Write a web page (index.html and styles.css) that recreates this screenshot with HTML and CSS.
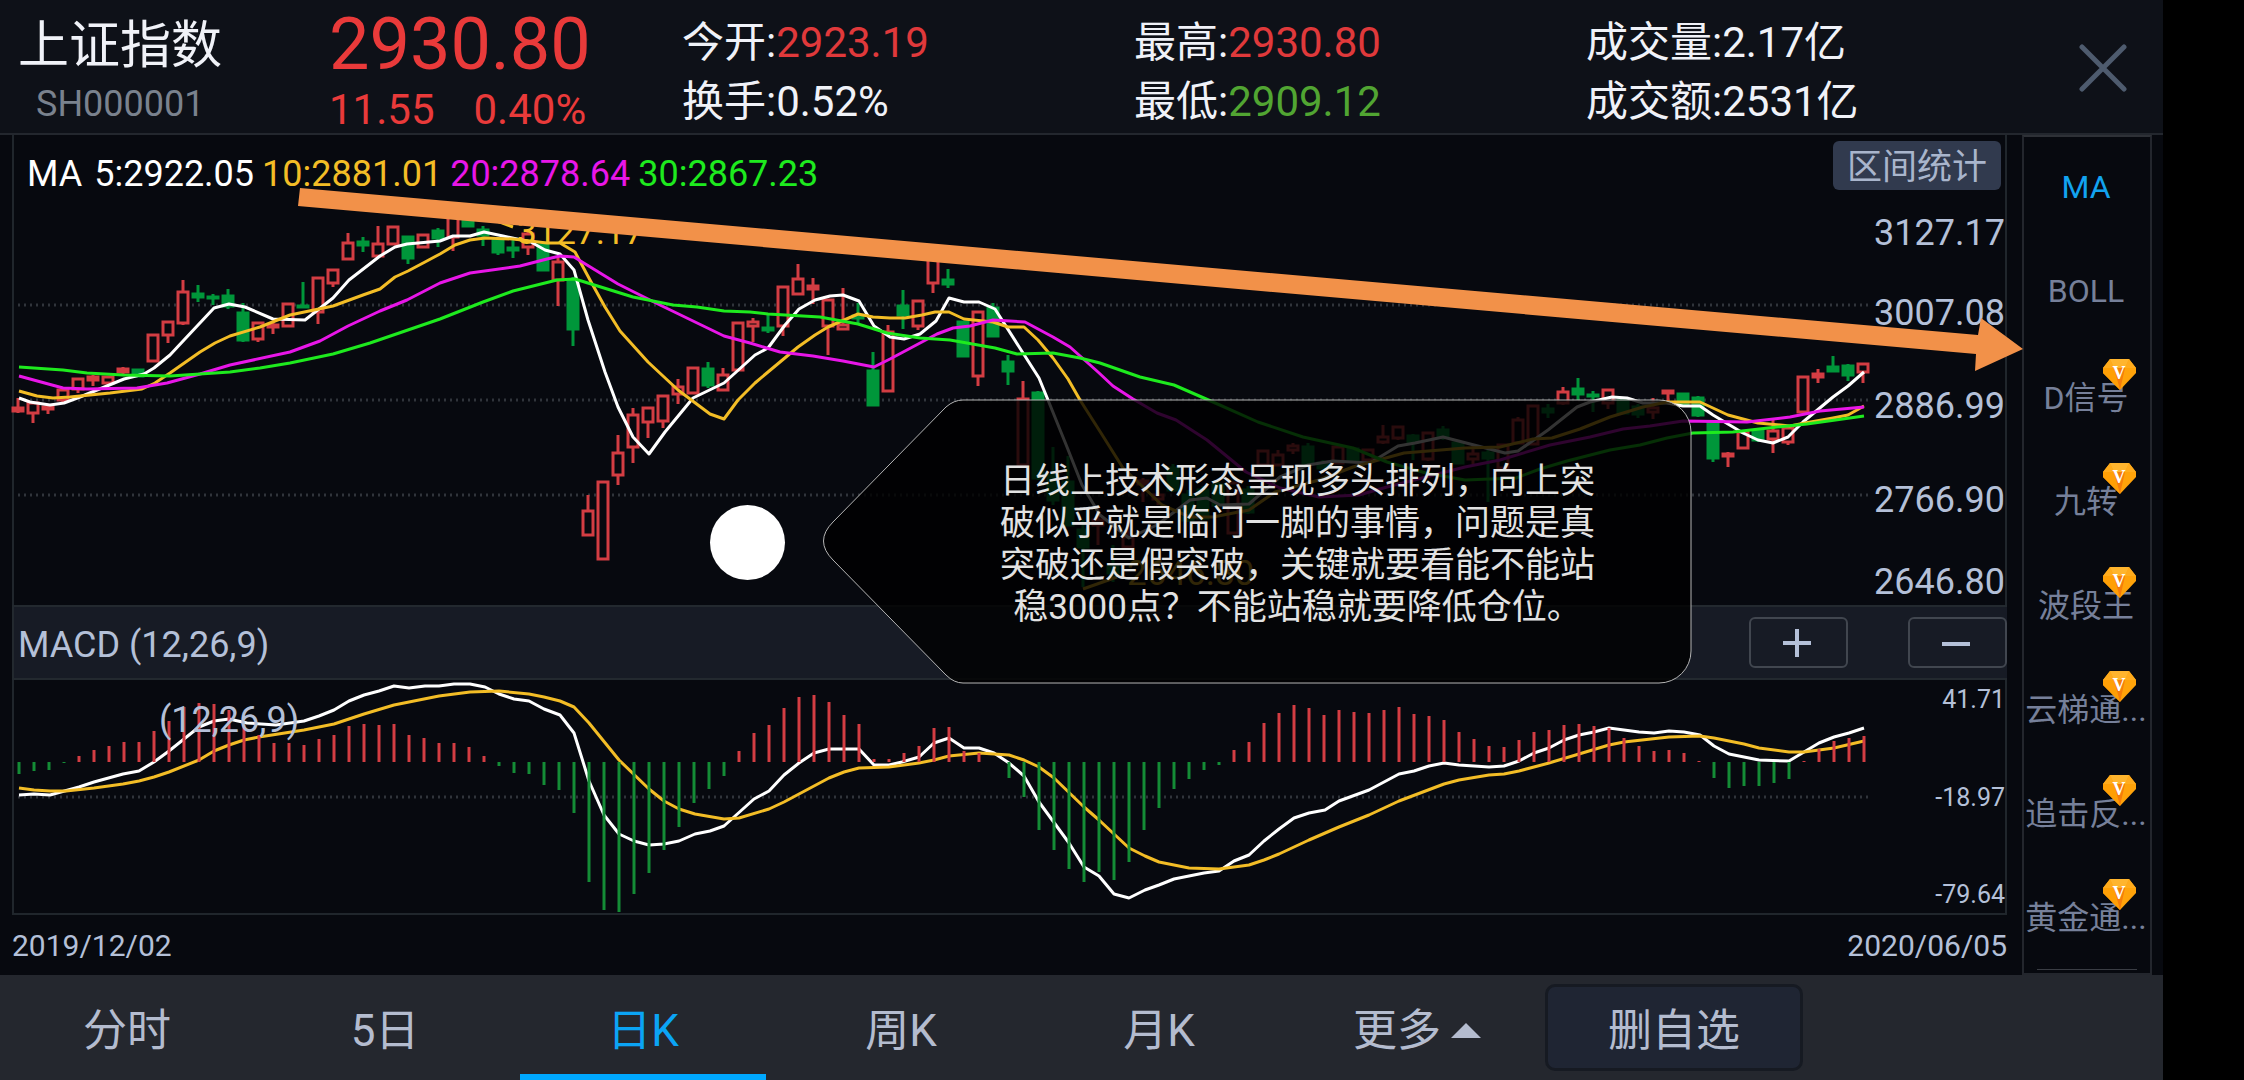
FILE: index.html
```html
<!DOCTYPE html>
<html lang="zh-CN">
<head>
    <meta charset="UTF-8">
    <meta name="viewport" content="width=device-width, initial-scale=1.0">
    <title>上证指数 SH000001</title>
    <link rel="stylesheet" href="styles.css">
</head>
<body>
    <svg class="defs" aria-hidden="true">
        <symbol id="gem" viewBox="0 0 33 31">
            <path d="M7 0h19l7 9v5L17 31 0 14V9z" fill="#ffa30a"/>
            <path d="M7 0h19l-4 9H11z" fill="#ffb52e"/>
            <path d="M0 9l11 0 6 22L0 14z" fill="#ff9f05"/>
            <path d="M11 9h11l-5 22z" fill="#f57c0a"/>
            <path d="M7 0l4 9H0zM26 0l7 9H22z" fill="#ffab1c"/>
        </symbol>
    </svg>

    <div class="screen">
        <header class="header">
            <div class="stock">
                <h1>上证指数</h1>
                <p>SH000001</p>
            </div>
            <div class="price">
                <strong>2930.80</strong>
                <p><span>11.55</span><span>0.40%</span></p>
            </div>
            <div class="stats">
                <p>今开:<span class="up">2923.19</span></p>
                <p>最高:<span class="up">2930.80</span></p>
                <p>成交量:2.17亿</p>
                <p>换手:0.52%</p>
                <p>最低:<span class="down">2909.12</span></p>
                <p>成交额:2531亿</p>
            </div>
            <button class="close" aria-label="关闭">
                <svg width="48" height="48" viewBox="0 0 48 48"><path d="M3 3l42 42M45 3L3 45"/></svg>
            </button>
        </header>

        <main class="main">
            <div class="charts">
                <section class="kline">
                    <svg id="kline" class="plot" viewBox="14 135 1858 470" preserveAspectRatio="none"></svg>
                    <div class="axis">
                        <span>3127.17</span>
                        <span>3007.08</span>
                        <span>2886.99</span>
                        <span>2766.90</span>
                        <span>2646.80</span>
                    </div>
                    <div class="legend">
                        <span class="ma">MA</span>
                        <span class="ma5">5:2922.05</span>
                        <span class="ma10">10:2881.01</span>
                        <span class="ma20">20:2878.64</span>
                        <span class="ma30">30:2867.23</span>
                    </div>
                    <button class="range">区间统计</button>
                </section>

                <div class="macd-bar">
                    <h2>MACD (12,26,9)</h2>
                    <button aria-label="放大"><svg width="28" height="28" viewBox="0 0 28 28"><path d="M0 14h28M14 0v28"/></svg></button>
                    <button aria-label="缩小"><svg width="28" height="28" viewBox="0 0 28 28"><path d="M0 15h28"/></svg></button>
                </div>

                <section class="macd">
                    <svg id="macd" class="plot" viewBox="14 680 1858 233" preserveAspectRatio="none"></svg>
                    <div class="macd-axis">
                        <span>41.71</span>
                        <span>-18.97</span>
                        <span>-79.64</span>
                    </div>
                    <span class="macd-label">(12,26,9)</span>
                </section>

                <div class="dates">
                    <span>2019/12/02</span>
                    <span>2020/06/05</span>
                </div>
            </div>

            <aside class="side">
                <button class="active">MA</button>
                <button>BOLL</button>
                <button>D信号<svg class="gem"><use href="#gem"/><text x="16" y="20">V</text></svg></button>
                <button>九转<svg class="gem"><use href="#gem"/><text x="16" y="20">V</text></svg></button>
                <button>波段王<svg class="gem"><use href="#gem"/><text x="16" y="20">V</text></svg></button>
                <button>云梯通...<svg class="gem"><use href="#gem"/><text x="16" y="20">V</text></svg></button>
                <button>追击反...<svg class="gem"><use href="#gem"/><text x="16" y="20">V</text></svg></button>
                <button>黄金通...<svg class="gem"><use href="#gem"/><text x="16" y="20">V</text></svg></button>
                <hr>
            </aside>
        </main>

        <nav class="tabs">
            <button>分时</button>
            <button>5日</button>
            <button class="active">日K</button>
            <button>周K</button>
            <button>月K</button>
            <button>更多<i class="caret"></i></button>
            <button class="remove">删自选</button>
        </nav>

        <!-- trend arrow and comment drawn over the chart -->
        <svg class="arrow" viewBox="0 0 1725 183" preserveAspectRatio="none">
            <path d="M2 0L1680 147L1683 130L1725 161L1677 183L1678 166L0 18z"/>
        </svg>
        <div class="dot"></div>
        <div class="note">
            <svg viewBox="0 0 869 285">
                <path d="M140 1H836A32 32 0 0 1 868 33V252A32 32 0 0 1 836 284H140Q131 284 123 276L10 161Q-9 142 10 123L123 8Q131 1 140 1z"/>
            </svg>
            <p>日线上技术形态呈现多头排列，向上突破似乎就是临门一脚的事情，问题是真突破还是假突破，关键就要看能不能站稳3000点？不能站稳就要降低仓位。</p>
        </div>
    </div>

    <script src="chart.js"></script>
</body>
</html>
```
FILE: styles.css
```css
* {
    margin: 0;
    padding: 0;
    box-sizing: border-box;
}

body {
    background: #000;
    font-family: Roboto, "Noto Sans CJK SC", sans-serif;
    color: #f0f2f8;
}

button {
    background: none;
    border: none;
    font-family: inherit;
    color: inherit;
    cursor: pointer;
}

.defs {
    position: absolute;
    width: 0;
    height: 0;
}

.screen {
    position: relative;
    display: flex;
    flex-direction: column;
    min-height: 100vh;
    margin-right: 81px;
    background: #07090f;
}

/* header */
.header {
    display: flex;
    height: 135px;
    padding: 14px 36px 0 18px;
    background: #0e1118;
    border-bottom: 2px solid #23272e;
}

.stock {
    width: 311px;
}

.stock h1 {
    font-size: 51px;
    font-weight: 400;
    line-height: 64px;
}

.stock p {
    padding: 6px 0 0 18px;
    font-size: 36px;
    line-height: 40px;
    color: #7a828e;
}

.price {
    width: 353px;
    color: #e93a3a;
}

.price strong {
    display: block;
    font-size: 72px;
    font-weight: 400;
    line-height: 62px;
}

.price p {
    display: flex;
    gap: 39px;
    padding-top: 13px;
    font-size: 42px;
    line-height: 42px;
}

.stats {
    flex: 1;
    display: grid;
    grid-template-columns: 452px 452px 1fr;
    grid-auto-rows: 59px;
    font-size: 42px;
    line-height: 58px;
}

.up {
    color: #e0393b;
}

.down {
    color: #51a532;
}

.close {
    align-self: flex-start;
    margin-top: 30px;
    height: 48px;
}

.close path {
    stroke: #4e5b6e;
    stroke-width: 5;
    stroke-linecap: round;
}

/* charts */
.main {
    flex: 1;
    display: flex;
    gap: 15px;
    padding: 0 11px 0 12px;
}

.charts {
    flex: 1;
    display: flex;
    flex-direction: column;
}

.kline,
.macd {
    position: relative;
    display: flex;
    border: solid #20262c;
    border-width: 0 2px;
}

.kline {
    flex: 2 1 0;
}

.macd {
    flex: 1 1 0;
    border-bottom-width: 2px;
}

.plot {
    flex: 1;
    width: 0;
    height: 100%;
    overflow: visible;
}

.axis {
    display: grid;
    grid-template-rows: 80fr 94fr 94fr 83fr 41fr;
    width: 133px;
    padding-top: 80px;
    font-size: 36px;
    line-height: 36px;
    text-align: right;
    color: #b4c0d8;
}

.macd-axis {
    display: flex;
    flex-direction: column;
    justify-content: space-between;
    width: 133px;
    padding: 5px 0 3px;
    font-size: 25px;
    line-height: 30px;
    text-align: right;
    color: #b4c0d8;
}

.legend {
    position: absolute;
    top: 21px;
    left: 13px;
    display: flex;
    gap: 8px;
    font-size: 36px;
    line-height: 36px;
}

.ma {
    padding-right: 4px;
}

.ma5, .ma {
    color: #fff;
}

.ma10 {
    color: #f3bd26;
}

.ma20 {
    color: #e816e8;
}

.ma30 {
    color: #1eea1e;
}

.range {
    position: absolute;
    top: 6px;
    right: 4px;
    width: 168px;
    height: 49px;
    padding-top: 4px;
    border-radius: 6px;
    background: #313a4e;
    font-size: 35px;
    line-height: 45px;
    color: #a9b5cc;
}

.macd-bar {
    display: flex;
    align-items: center;
    gap: 60px;
    height: 75px;
    padding-left: 4px;
    background: #171b25;
    border: 2px solid #23292f;
    border-right: none;
}

.macd-bar h2 {
    flex: 1;
    padding-top: 4px;
    font-size: 36px;
    font-weight: 400;
    color: #b4c0d8;
}

.macd-bar button {
    width: 99px;
    height: 51px;
    padding-right: 3px;
    border: 2px solid #41464f;
    border-radius: 6px;
    line-height: 0;
}

.macd-bar path {
    stroke: #b4c0d8;
    stroke-width: 4;
}

.macd-label {
    position: absolute;
    top: 22px;
    left: 145px;
    font-size: 36px;
    line-height: 36px;
    color: #b4c0d8;
}

.dates {
    display: flex;
    justify-content: space-between;
    height: 60px;
    font-size: 30px;
    line-height: 62px;
    color: #b4c0d8;
}

/* chart drawing */
.grid {
    stroke: #30343b;
    stroke-width: 3;
    stroke-dasharray: 2 4;
}

.line {
    fill: none;
    stroke-width: 3;
    stroke-linejoin: round;
}

.candle {
    stroke-width: 3;
}

.candle.r {
    fill: #07090f;
    stroke: #d33d43;
}

.candle.g {
    fill: #00963a;
    stroke: #00963a;
}

.bar {
    stroke-width: 3;
}

.bar.r {
    stroke: #d33d43;
}

.bar.g {
    stroke: #148c36;
}

.peak {
    fill: #f3bd26;
    font-size: 35px;
}

/* indicator list */
.side {
    width: 130px;
    border: 2px solid #23262d;
    border-top-color: #2e3137;
}

.side button {
    position: relative;
    display: block;
    width: 100%;
    height: 104px;
    padding: 0 2px 4px 0;
    font-size: 32px;
    white-space: nowrap;
    color: #76809a;
}

.side .active {
    color: #12a3ef;
}

.gem {
    position: absolute;
    top: 14px;
    right: 14px;
    width: 33px;
    height: 31px;
}

.gem text {
    font-family: "Liberation Serif", serif;
    font-size: 18px;
    font-weight: 700;
    text-anchor: middle;
    fill: #fff;
}

.side hr {
    height: 1px;
    margin: 0 13px;
    border: none;
    background: #3a3d44;
}

/* bottom tabs */
.tabs {
    display: flex;
    height: 105px;
    background: #24272e;
    color: #b4bccf;
}

.tabs button {
    position: relative;
    width: 258px;
    padding: 0 4px 2px 0;
    font-size: 44px;
}

.tabs .active {
    color: #0ba4f5;
}

.tabs .active::after {
    content: "";
    position: absolute;
    left: 4px;
    right: 8px;
    bottom: 0;
    height: 6px;
    background: #00a8ff;
}

.caret {
    display: inline-block;
    margin-left: 10px;
    border: solid transparent;
    border-width: 0 15px 15px;
    border-bottom-color: #b4bccf;
    vertical-align: 8px;
}

.tabs .remove {
    width: 258px;
    height: 87px;
    margin: 9px 0 0 -3px;
    padding: 0 0 2px;
    border: 3px solid #161a22;
    border-radius: 10px;
    background: #1f2533;
}

/* overlays */
.arrow {
    position: absolute;
    top: 188px;
    left: 298px;
    width: 1725px;
    height: 183px;
    fill: #f29149;
}

.dot {
    position: absolute;
    top: 505px;
    left: 710px;
    width: 75px;
    height: 75px;
    border-radius: 50%;
    background: #fff;
}

.note {
    position: absolute;
    top: 399px;
    left: 823px;
    width: 869px;
    height: 285px;
    padding: 62px 94px 0 174px;
}

.note svg {
    position: absolute;
    top: 0;
    left: 0;
    width: 100%;
    height: 100%;
    fill: rgba(0, 0, 0, 0.8);
    stroke: #b5b5b5;
    stroke-width: 1;
}

.note p {
    position: relative;
    font-size: 35px;
    line-height: 42px;
    text-align: center;
    color: #e2e2e2;
}
```
FILE: chart.js
```js
const START = 18;
const STEP = 15;
const ZERO = 762;

// colour, high, body top, body bottom, low
const candles = [
    ['r',398,408,411,413], ['r',402,403,413,423], ['r',405,407,409,414], ['r',390,390,400,402],
    ['r',379,379,389,393], ['r',375,377,380,386], ['r',377,377,383,383], ['r',367,369,372,374],
    ['g',369,370,376,377], ['r',335,335,361,361], ['r',322,322,335,343], ['r',280,292,323,325],
    ['g',285,294,297,302], ['g',294,297,298,305], ['g',289,296,306,309], ['g',303,313,340,342],
    ['r',323,323,339,342], ['r',322,325,327,334], ['r',304,304,326,326], ['g',282,306,307,308],
    ['r',278,278,312,324], ['r',270,270,283,287], ['r',233,243,259,259], ['g',237,242,245,252],
    ['r',226,244,256,256], ['r',227,227,244,244], ['g',236,237,258,264], ['r',235,235,247,247],
    ['g',228,231,238,247], ['r',215,215,237,251], ['g',210,212,226,227], ['g',226,230,235,246],
    ['g',239,240,252,255], ['g',239,248,250,258], ['r',232,234,247,255], ['g',244,245,270,271],
    ['r',257,262,280,306], ['g',277,281,329,346], ['r',495,511,535,535], ['r',482,482,559,559],
    ['r',435,453,475,485], ['r',408,415,447,463], ['r',408,408,422,438], ['r',396,396,421,428],
    ['r',379,387,394,404], ['r',368,368,393,393], ['g',362,369,385,388], ['r',368,375,390,390],
    ['r',323,323,370,370], ['r',318,322,326,342], ['g',315,328,330,333], ['r',287,287,326,336],
    ['r',264,279,294,294], ['r',278,286,289,304], ['r',300,300,326,355], ['r',288,325,329,330],
    ['g',303,316,318,323], ['g',352,371,405,406], ['r',325,332,391,391], ['g',290,306,315,329],
    ['r',301,301,326,330], ['r',255,255,283,293], ['g',269,280,284,288], ['g',321,322,356,357],
    ['r',312,312,376,386], ['g',303,308,336,337], ['g',355,362,371,385], ['r',381,399,465,465],
    ['g',391,393,478,480], ['g',447,475,500,505], ['g',456,482,525,526], ['g',520,530,547,587],
    ['r',507,520,525,545], ['g',545,567,573,582], ['r',520,537,547,547], ['r',478,481,484,502],
    ['r',492,495,499,505], ['g',464,468,490,492], ['g',490,495,520,522], ['g',486,490,518,520],
    ['g',482,485,505,508], ['r',483,483,533,533], ['g',486,490,512,514], ['r',451,451,465,465],
    ['r',450,455,465,465], ['r',443,446,450,454], ['g',443,447,463,465], ['g',460,463,468,470],
    ['r',447,447,463,463], ['g',447,449,460,462], ['r',450,450,460,460], ['r',425,437,442,444],
    ['r',427,427,438,440], ['g',434,436,442,460], ['r',433,433,459,461], ['g',426,430,437,440],
    ['g',441,443,463,464], ['r',445,454,459,464], ['g',450,453,458,502], ['r',445,445,468,468],
    ['r',417,420,443,443], ['r',406,406,444,444], ['g',404,409,412,418], ['r',387,392,403,405],
    ['g',378,389,394,400], ['g',391,395,396,412], ['r',390,390,403,409], ['g',400,401,413,414],
    ['g',404,407,414,418], ['r',398,408,412,419], ['r',390,391,393,403], ['g',393,394,405,406],
    ['g',396,398,415,417], ['g',422,423,458,462], ['r',452,454,456,467], ['r',432,432,448,448],
    ['g',430,431,440,442], ['r',420,431,439,453], ['r',428,428,442,445], ['r',377,377,412,412],
    ['r',369,374,377,383], ['g',356,367,371,372], ['g',364,366,375,381], ['r',364,364,372,383]
];

const averages = {
    '#ffffff': '19,398 30,402 50,405 64,403 80,397 124,379 144,374 154,368 170,355 184,340 214,308 229,304 245,307 273,319 305,320 333,298 349,280 380,256 395,247 407,244 440,241 453,236 470,236 484,232 503,236 531,242 545,250 560,254 574,270 588,320 605,372 618,407 633,437 649,454 665,432 693,398 724,383 755,355 768,348 785,325 799,309 815,300 830,296 843,295 859,301 874,326 890,337 904,339 920,334 936,321 949,298 964,302 979,302 995,309 1023,353 1039,378 1048,400 1067,447 1082,485 1100,515 1129,538 1157,525 1190,500 1207,498 1220,505 1249,504 1280,477 1308,465 1333,461 1370,463 1398,446 1415,443 1443,437 1474,445 1505,453 1518,451 1548,430 1577,407 1590,402 1612,397 1627,398 1643,403 1667,403 1683,406 1700,406 1713,415 1743,433 1758,440 1773,443 1788,437 1803,422 1833,397 1848,386 1864,372',
    '#f3bd26': '19,391 37,396 53,398 70,397 110,393 142,389 155,383 170,373 200,352 215,343 230,336 260,327 290,315 333,306 363,295 380,289 395,277 408,271 425,262 440,254 455,245 470,240 485,238 513,239 530,241 547,243 560,243 575,252 590,280 605,307 620,331 648,362 678,390 710,414 724,419 738,400 755,383 768,372 798,347 815,335 828,327 858,314 873,317 890,318 905,318 922,315 935,312 949,312 964,319 993,322 1008,327 1024,327 1038,340 1053,358 1068,379 1080,400 1101,433 1123,468 1162,505 1190,517 1213,517 1249,510 1275,492 1319,480 1353,467 1404,453 1465,448 1500,447 1533,439 1552,438 1580,429 1610,417 1643,407 1667,402 1700,402 1728,415 1758,423 1790,426 1805,423 1833,418 1848,415 1864,406',
    '#e816e8': '19,376 63,388 87,389 137,388 167,383 200,374 230,365 290,352 320,341 348,326 380,311 407,300 440,283 470,273 520,266 547,259 560,256 574,257 618,284 660,305 724,336 750,343 780,352 813,356 843,361 874,367 890,359 937,334 953,328 970,326 993,320 1025,322 1053,337 1070,347 1098,372 1113,386 1133,399 1157,413 1176,420 1207,440 1246,472 1280,488 1319,497 1359,495 1387,487 1465,467 1500,460 1550,445 1590,437 1623,429 1650,426 1683,421 1747,422 1790,417 1820,411 1864,407',
    '#1eea1e': '19,367 63,370 87,373 123,375 170,376 230,372 260,368 290,363 333,354 370,343 440,319 483,302 513,291 557,280 575,279 633,297 673,305 697,307 724,311 750,312 768,314 820,317 858,324 887,333 920,338 950,340 995,348 1017,354 1053,353 1080,358 1100,363 1140,377 1174,385 1213,402 1258,422 1303,437 1353,448 1387,462 1426,473 1465,480 1516,478 1540,469 1567,461 1610,450 1640,445 1667,438 1693,433 1733,432 1777,427 1807,424 1864,416'
};

const bars = [
    774, 771, 770, 763, 756, 750, 746, 742, 742, 731, 721, 707, 703, 704, 710, 725,
    735, 743, 743, 745, 739, 735, 726, 724, 725, 724, 735, 738, 743, 743, 747, 756,
    766, 773, 774, 785, 790, 813, 882, 910, 912, 894, 873, 850, 827, 803, 789, 776,
    751, 733, 725, 708, 697, 695, 702, 715, 724, 759, 759, 753, 746, 728, 727, 751,
    753, 762, 778, 797, 830, 850, 869, 882, 872, 880, 862, 830, 808, 789, 779, 770,
    765, 750, 742, 723, 713, 705, 708, 715, 710, 712, 713, 710, 707, 714, 716, 720,
    732, 739, 746, 747, 740, 732, 730, 725, 724, 726, 728, 738, 746, 751, 750, 753,
    761, 778, 788, 786, 786, 783, 779, 761, 749, 741, 738, 736
];

const dif = '19,795 34,794 50,795 79,787 94,782 123,774 139,771 154,762 169,751 184,739 199,727 214,721 229,719 247,723 276,725 304,721 319,716 334,710 349,701 364,695 379,691 394,686 409,688 425,686 439,686 454,684 470,684 485,687 499,694 514,699 529,701 544,709 560,715 574,733 589,781 604,815 619,834 634,841 649,845 664,844 679,841 695,834 710,831 724,826 754,799 769,791 784,775 799,763 814,753 829,749 859,749 874,765 889,765 902,762 919,757 934,743 949,738 964,748 979,748 994,753 1009,763 1024,776 1039,802 1069,843 1084,867 1099,876 1114,894 1129,898 1145,890 1159,885 1174,879 1204,873 1219,871 1234,861 1249,855 1264,841 1279,829 1294,818 1309,813 1325,810 1339,801 1369,790 1399,774 1414,771 1429,766 1444,763 1459,765 1489,767 1504,766 1519,761 1534,753 1549,748 1564,740 1579,735 1594,732 1609,728 1639,732 1654,733 1669,731 1684,732 1700,735 1714,746 1729,754 1759,760 1789,761 1804,752 1819,743 1834,737 1849,733 1864,728';
const dea = '19,788 34,790 50,791 66,791 94,788 123,784 139,781 154,777 169,772 199,760 214,751 229,745 244,740 259,737 304,730 334,724 364,714 394,705 439,696 470,692 499,691 529,694 544,697 560,701 574,707 589,723 619,760 649,789 664,801 679,809 695,814 724,819 739,818 769,809 784,802 829,778 844,772 859,768 889,767 919,763 934,760 949,756 979,753 1009,755 1024,760 1039,767 1054,778 1084,807 1099,820 1129,848 1145,856 1159,862 1189,868 1219,869 1249,865 1264,860 1279,854 1309,840 1339,827 1369,815 1399,801 1444,784 1459,780 1489,775 1504,774 1519,771 1549,763 1579,754 1609,745 1624,742 1669,737 1700,736 1714,738 1744,744 1759,748 1789,752 1804,752 1834,748 1864,741';

function gridLine(y) {
    return `<path class="grid" d="M18 ${y}H1868"/>`;
}

function line(points, color) {
    return `<polyline class="line" points="${points}" stroke="${color}"/>`;
}

function drawKline() {
    let html = [305, 400, 495].map(gridLine).join('');

    candles.forEach(([color, high, top, bottom, low], i) => {
        const x = START + i * STEP;
        html += `<g class="candle ${color}">
            <path d="M${x} ${high}V${top}M${x} ${bottom}V${low}"/>
            <rect x="${x - 5}" y="${top}" width="10" height="${bottom - top}"/>
        </g>`;
    });

    for (const color in averages) {
        html += line(averages[color], color);
    }

    // highest and lowest price marks
    html += line('478,214 513,227', '#f3bd26');
    html += '<text class="peak" x="517" y="244">3127.17</text>';
    html += line('1083,589 1117,577', '#f3bd26');
    html += '<text class="peak" x="1127" y="585">2646.80</text>';

    document.getElementById('kline').innerHTML = html;
}

function drawMacd() {
    let html = gridLine(797);
    html += line(dif, '#ffffff') + line(dea, '#f3bd26');

    bars.forEach((y, i) => {
        const color = y < ZERO ? 'r' : 'g';
        html += `<path class="bar ${color}" d="M${START + 1 + i * STEP} ${ZERO}V${y}"/>`;
    });

    document.getElementById('macd').innerHTML = html;
}

drawKline();
drawMacd();
```
